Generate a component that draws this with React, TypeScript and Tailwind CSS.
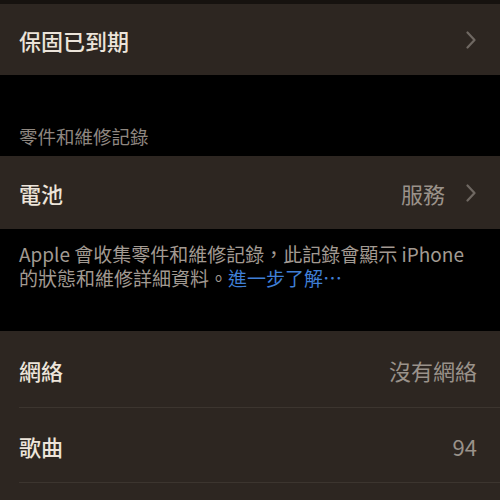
import React from "react";

const font = { fontFamily: '"Noto Sans CJK TC", "Noto Sans", sans-serif' };

function Chevron() {
  return (
    <svg width="12" height="18" viewBox="0 0 12 18" className="shrink-0">
      <path d="M2.5 1.5 L9.5 9 L2.5 16.5" fill="none" stroke="#6f6862" strokeWidth="2.2" strokeLinecap="round" strokeLinejoin="round" />
    </svg>
  );
}

function Row({ label, value, chevron, sep, h }: { label: string; value?: string; chevron?: boolean; sep?: boolean; h: string }) {
  return (
    <div className={`relative flex items-center pl-[19px] pr-[23px] ${h}`}>
      <span className="text-[22px] text-[#ece4da] leading-none font-medium">{label}</span>
      <span className="flex-1" />
      {value && <span className="text-[22px] text-[#9a928a] leading-none">{value}</span>}
      {chevron && <span className="ml-[20px] flex items-center"><Chevron /></span>}
      {sep && <div className="absolute left-[19px] right-0 bottom-0 h-px bg-[#3c352f]" />}
    </div>
  );
}

export default function App() {
  return (
    <div lang="zh-Hant-TW" className="w-[500px] h-[500px] bg-black overflow-hidden flex flex-col" style={font}>
      <div className="h-[4px] bg-[#16120f]" />
      <div className="bg-[#2d2621]">
        <Row label="保固已到期" chevron h="h-[71px]" />
      </div>
      <div className="h-[81px] flex items-end pl-[19px] pb-[11px]">
        <span className="text-[18.5px] text-[#8f8780] leading-none">零件和維修記錄</span>
      </div>
      <div className="bg-[#2d2621]">
        <Row label="電池" value="服務" chevron h="h-[73px]" />
      </div>
      <div className="pl-[19px] pr-[10px] pt-[13px] h-[102px] text-[19px] leading-[23.5px] text-[#a29a92] whitespace-nowrap">
        Apple 會收集零件和維修記錄，此記錄會顯示 iPhone
        <br />
        的狀態和維修詳細資料。<span className="text-[#3f7fd6]">進一步了解⋯</span>
      </div>
      <div className="bg-[#2d2621] flex-1">
        <Row label="網絡" value="沒有網絡" sep h="h-[77px]" />
        <Row label="歌曲" value="94" sep h="h-[75px]" />
      </div>
    </div>
  );
}
